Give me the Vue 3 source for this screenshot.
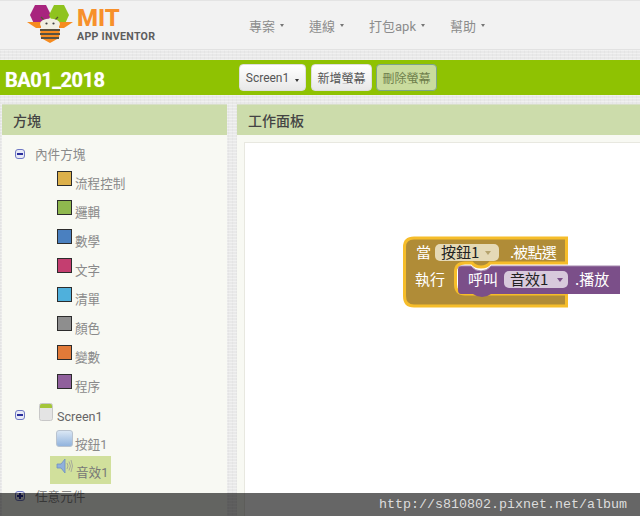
<script setup>
const nav = ['專案', '連線', '打包apk', '幫助']
const drawers = [
  { name: '流程控制', color: '#dcb04a' },
  { name: '邏輯', color: '#8fb84e' },
  { name: '數學', color: '#4a80c0' },
  { name: '文字', color: '#c43e70' },
  { name: '清單', color: '#4fb0dc' },
  { name: '顏色', color: '#8e8e8e' },
  { name: '變數', color: '#e27a38' },
  { name: '程序', color: '#90609c' }
]
</script>

<template>
  <div class="page">
    <header class="top">
      <div class="logo">
        <svg class="logo-mark" width="77" height="49" viewBox="0 0 77 49">
          <polygon points="35,4 46,4 51,14 46,25 35,25 30,14" fill="#a8247e" />
          <polygon points="54,4 64,4 69,14 64,25 54,25 49,14" fill="#8fc31f" />
          <path d="M27,21 H41 V27 H36 Z" fill="#f68b1f" />
          <path d="M73,21 H59 V27 H64 Z" fill="#f68b1f" />
          <path d="M44,19 l-3,-3 M55,19 l3,-3" stroke="#55552f" stroke-width="1.2" />
          <ellipse cx="50" cy="23" rx="10" ry="5.5" fill="#f1f0e2" />
          <circle cx="46.5" cy="22.5" r="1.1" fill="#444" />
          <circle cx="53.5" cy="22.5" r="1.1" fill="#444" />
          <path d="M40,28 H60 L59,37 L50,42 L41,37 Z" fill="#f68b1f" />
          <rect x="40" y="28" width="20" height="2" fill="#5a5240" />
          <rect x="40" y="32" width="20" height="2" fill="#5a5240" />
          <rect x="41" y="36" width="18" height="2" fill="#5a5240" />
        </svg>
        <div class="logo-text">
          <span class="mit">MIT</span>
          <span class="inventor">APP INVENTOR</span>
        </div>
      </div>
      <nav class="nav">
        <span v-for="item in nav" :key="item" class="nav-item">{{ item }}<i class="caret"></i></span>
      </nav>
    </header>

    <div class="toolbar">
      <h1 class="project">BA01_2018</h1>
      <div class="buttons">
        <button class="btn screen">Screen1<i class="caret dark"></i></button>
        <button class="btn add">新增螢幕</button>
        <button class="btn del">刪除螢幕</button>
      </div>
    </div>

    <main class="panels">
      <section class="panel left">
        <h2 class="panel-head">方塊</h2>
        <div class="tree">
          <div class="row root"><i class="toggle minus"></i><span class="root-label">內件方塊</span></div>
          <div v-for="d in drawers" :key="d.name" class="row drawer">
            <i class="swatch" :style="{ background: d.color }"></i><span>{{ d.name }}</span>
          </div>
          <div class="row screen-row">
            <i class="toggle minus"></i>
            <svg class="phone" width="14" height="18" viewBox="0 0 14 18">
              <rect x=".5" y=".5" width="13" height="17" rx="2" fill="#e4e4e4" stroke="#c8c8c8" />
              <path d="M1,5 V2.5 Q1,1 2.5,1 H11.5 Q13,1 13,2.5 V5 Z" fill="#a4c639" />
            </svg>
            <span class="screen-label">Screen1</span>
          </div>
          <div class="row comp">
            <svg width="17" height="17" viewBox="0 0 17 17">
              <defs>
                <linearGradient id="btnFace" x1="0" y1="0" x2="0" y2="1">
                  <stop offset="0" stop-color="#dce8f5" />
                  <stop offset="1" stop-color="#8fb2dc" />
                </linearGradient>
              </defs>
              <rect x=".5" y=".5" width="16" height="16" rx="2.5" fill="url(#btnFace)" stroke="#b9c3cf" />
            </svg>
            <span>按鈕1</span>
          </div>
          <div class="row comp selected">
            <svg width="18" height="16" viewBox="0 0 18 16">
              <path d="M1,6 H5 L9,1 V15 L5,10 H1 Z" fill="#8fb0dc" stroke="#6f8fc0" stroke-width=".8" />
              <path d="M11,5 Q13,8 11,11 M13,3.5 Q16,8 13,12.5 M15,2 Q18,8 15,14" fill="none" stroke="#9a9a9a" stroke-width=".8" />
            </svg>
            <span>音效1</span>
          </div>
          <div class="row root any"><i class="toggle plus"></i><span class="root-label">任意元件</span></div>
        </div>
      </section>

      <section class="panel right">
        <h2 class="panel-head">工作面板</h2>
        <div class="workspace">
          <svg class="blocks" width="240" height="85" viewBox="0 0 240 85">
            <path d="M4.5,19 Q4.5,10 14,10 H166.5 V35 H90 Q87,39 81,39 Q75,39 72,35 H65 Q55.5,35 55.5,44 V56 Q55.5,66 65,66 H166.5 V78 H14 Q4.5,78 4.5,68 Z"
                  fill="#b08c37" stroke="#f6bd2a" stroke-width="3" />
            <path d="M58,41 Q58,38 61,38 H71 Q75,43 81,43 Q87,43 91,38 H220 V66 H91 Q87,69 82,69 Q77,69 73,66 H61 Q58,66 58,62 Z"
                  fill="#7b4f89" />
            <path d="M58,41 Q58,38 61,38 H71 Q75,43 81,43 Q87,43 91,38 H220" fill="none" stroke="#a386ac" stroke-width="1" />
            <rect x="35" y="16" width="64" height="17" rx="5" fill="#e5d9b6" />
            <rect x="104" y="43" width="64" height="17" rx="5" fill="#d8c9dc" />
            <text class="bt" x="16" y="30">當</text>
            <text class="bt dk" x="41" y="30">按鈕1</text>
            <path d="M85,23 h6 l-3,4 z" fill="#b6a36d" />
            <text class="bt tight" x="110" y="30">.被點選</text>
            <text class="bt" x="15" y="57">執行</text>
            <text class="bt" x="68" y="57">呼叫</text>
            <text class="bt dk" x="110" y="57">音效1</text>
            <path d="M157,50 h6 l-3,4 z" fill="#7b4f89" />
            <text class="bt" x="175" y="57">.播放</text>
          </svg>
        </div>
      </section>
    </main>

    <div class="watermark">http://s810802.pixnet.net/album</div>
  </div>
</template>

<style>
html, body { margin: 0; background: #e9e9e9; }
</style>

<style scoped>
.page {
  position: relative;
  width: 640px;
  height: 516px;
  overflow: hidden;
  background-color: #e9e9e9;
  background-image:
    repeating-linear-gradient(0deg, rgba(255, 255, 255, 0.35) 0 1px, transparent 1px 3px),
    repeating-linear-gradient(90deg, rgba(0, 0, 0, 0.025) 0 1px, transparent 1px 4px);
  font-family: "Roboto", "Noto Sans CJK TC", sans-serif;
  display: flex;
  flex-direction: column;
}
.top {
  height: 50px;
  flex: none;
  background: #f2f2f2;
  border-top: 1px solid #e4e4e4;
  border-bottom: 1px solid #e2e2e2;
  box-sizing: border-box;
  display: flex;
  align-items: center;
}
.logo { display: flex; width: 249px; height: 48px; flex: none; }
.logo-mark { flex: none; }
.logo-text { display: flex; flex-direction: column; }
.mit { font: 800 24px/20px "Roboto", sans-serif; color: #f7902b; margin-top: 7px; }
.inventor { font: 700 10.6px/13px "Roboto", sans-serif; color: #5d5d5d; letter-spacing: 0.3px; margin-top: 2px; white-space: nowrap; }
.nav { display: flex; font-size: 13px; color: #8c8c8c; gap: 25px; margin-top: 1px; }
.nav-item { display: inline-flex; align-items: center; }
.caret {
  display: inline-block;
  margin-left: 5px;
  border-left: 2.5px solid transparent;
  border-right: 2.5px solid transparent;
  border-top: 3px solid #777;
}
.caret.dark { border-top-color: #333; margin-left: 6px; }
.toolbar {
  margin-top: 10px;
  height: 35px;
  flex: none;
  background: #8fc202;
  display: flex;
  align-items: center;
}
.project {
  margin: 5px 0 0 5px;
  width: 234px;
  font: 700 20px/24px "Roboto", sans-serif;
  letter-spacing: -0.5px;
  color: #fff;
  text-shadow: 0 0 1px #dfe9a8;
}
.buttons { display: flex; gap: 5px; }
.btn {
  height: 27px;
  padding: 0;
  font-family: inherit;
  font-size: 12px;
  color: #555;
  border: 1px solid #ddd;
  border-radius: 4px;
  background: linear-gradient(#fff, #e8e8e8);
  box-sizing: border-box;
}
.screen { width: 67px; }
.add { width: 61px; }
.del {
  width: 61px;
  margin-left: -1px;
  background: #c9db9d;
  color: #6f7f4c;
  border: 1px solid #7da48a;
}
.panels {
  margin-top: 9px;
  flex: 1;
  min-height: 0;
  display: flex;
  gap: 10px;
  padding-left: 2px;
}
.panel { display: flex; flex-direction: column; background: #f8f9f3; }
.left { width: 225px; flex: none; }
.right { flex: 1; min-width: 0; }
.panel-head {
  margin: 0;
  height: 31px;
  flex: none;
  background: #ccdcab;
  border-top: 1px solid #d8dfc8;
  box-sizing: border-box;
  padding-left: 11px;
  font: 500 14px/30px "Noto Sans CJK TC", sans-serif;
  color: #444;
}
.tree { padding-top: 5px; font-size: 12.6px; color: #8a8a8a; }
.row { height: 29px; display: flex; align-items: center; box-sizing: border-box; }
.root { padding-left: 13px; height: 28px; }
.root-label { margin-left: 10px; margin-top: -1px; }
.toggle {
  width: 8px;
  height: 8px;
  border: 1px solid #6f78c4;
  border-radius: 3px;
  background: #e8eaf6;
  position: relative;
  flex: none;
}
.toggle::before {
  content: "";
  position: absolute;
  left: 1px;
  right: 1px;
  top: 3px;
  height: 2px;
  background: #2a2f9c;
}
.plus::after {
  content: "";
  position: absolute;
  top: 1px;
  bottom: 1px;
  left: 3px;
  width: 2px;
  background: #2a2f9c;
}
.drawer { padding-left: 55px; }
.swatch {
  width: 13px;
  height: 13px;
  border: 1px solid #2c2c2c;
  flex: none;
  margin-top: -9px;
}
.drawer span { margin-left: 3px; margin-top: 0; }
.screen-row { padding-left: 13px; }
.phone { margin-left: 14px; margin-top: -5px; flex: none; }
.screen-label { margin-left: 4px; margin-top: 4px; color: #666; }
.comp { padding-left: 54px; height: 27px; }
.comp svg { flex: none; margin-top: -9px; }
.comp span { margin-left: 2px; margin-top: 2px; }
.comp.selected {
  margin-left: 48px;
  width: 61px;
  padding-left: 6px;
  background: #d1e09c;
  height: 28px;
  color: #777;
}
.any { margin-top: -2px; }
.workspace {
  position: relative;
  flex: 1;
  margin: 7px 0 0 7px;
  background: #fff;
  border: 1px solid #e8e8e0;
  border-right: 0;
  border-bottom: 0;
}
.blocks { position: absolute; left: 155px; top: 85px; }
.bt { font: 15px "Noto Sans CJK TC", sans-serif; fill: #fff; }
.bt.dk { fill: #222; }
.bt.tight { letter-spacing: -0.8px; }
.watermark {
  position: absolute;
  left: 0;
  right: 0;
  bottom: 0;
  height: 23px;
  background: rgba(0, 0, 0, 0.6);
  color: #ddd;
  font: 13.33px/23px "Liberation Mono", monospace;
  text-align: right;
  padding-right: 13px;
  box-sizing: border-box;
}
</style>
